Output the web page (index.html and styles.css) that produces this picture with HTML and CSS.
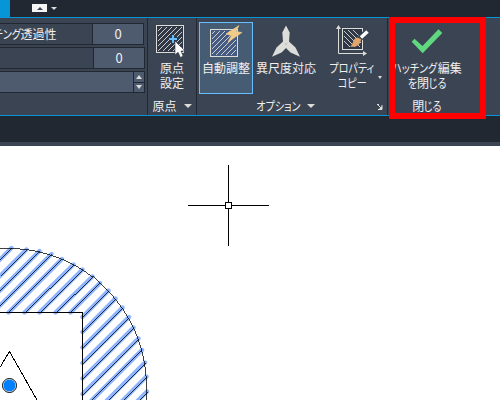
FILE: index.html
```
<!DOCTYPE html>
<html lang="ja">
<head>
    <meta charset="utf-8">
    <title>ハッチング編集</title>
    <link rel="stylesheet" href="styles.css">
</head>
<body>
    <div class="tabs">
        <div class="tab-active"></div>
        <div class="tab-toggle"><span class="arrow up dark"></span></div>
        <span class="arrow down small"></span>
    </div>

    <div class="ribbon">
        <div class="panel props">
            <div class="field"><span class="field-name transparency"><span class="kana k3">チング</span>透過性</span><span class="field-value">0</span></div>
            <div class="field second"><span class="field-name"></span><span class="field-value">0</span></div>
            <div class="field list">
                <span class="list-value"></span>
                <div class="spinner">
                    <div><span class="arrow up"></span></div>
                    <div><span class="arrow down"></span></div>
                </div>
            </div>
        </div>

        <div class="panel origin">
            <div class="tool">
                <svg class="origin-icon" width="32" height="36" viewBox="0 0 32 36">
                    <defs>
                        <pattern id="stripes" width="5" height="5" patternUnits="userSpaceOnUse">
                            <path d="M-1 6L6 -1M-1 1L1 -1M4 6L6 4" stroke="#dcdcd8" stroke-width=".9"/>
                        </pattern>
                    </defs>
                    <rect x="1.5" y="1.5" width="27" height="27" fill="#303746"/>
                    <rect x="3" y="3" width="24" height="24" fill="url(#stripes)"/>
                    <rect x="1.5" y="1.5" width="27" height="27" fill="none" stroke="#dcdcd8"/>
                    <path d="M14 15H22M18 11V19" stroke="#303746" stroke-width="4"/>
                    <path d="M14 15H22M18 11V19" stroke="#66bdff" stroke-width="2"/>
                    <path d="M20 17V31L23 28L25.500 33.500L28 32L26 27H30Z" fill="#fff" stroke="#343c4a" stroke-width=".6"/>
                </svg>
                <div class="label">原点<br>設定</div>
            </div>
            <div class="panel-title">原点<span class="arrow down"></span></div>
        </div>

        <div class="panel options">
            <div class="tools">
                <div class="tool selected">
                    <svg class="auto-icon" width="36" height="36" viewBox="0 0 36 36">
                        <rect x="3.500" y="5.500" width="27" height="27" fill="#465b82"/>
                        <rect x="5" y="7" width="24" height="24" fill="url(#stripes)"/>
                        <rect x="3.500" y="5.500" width="27" height="27" fill="none" stroke="#dcdcd8"/>
                        <path d="M32 1.500L19 10L24.500 11.500L21 18L35 8.500L29 7.500Z" fill="#f1cb88" stroke="#f1cb88" stroke-width=".6"/>
                    </svg>
                    <div class="label">自動調整</div>
                </div>
                <div class="tool scale">
                    <svg width="32" height="36" viewBox="0 0 32 36">
                        <path d="M16 1.500L12.300 8.500L13 17.500L6.500 23.500L2 32.700L11.500 28.500L16 24L20.500 28.500L30 32.700L25.500 23.500L19 17.500L19.700 8.500Z" fill="#dcdcd8"/>
                        <circle cx="16" cy="20" r=".8" fill="#a5a9ae"/>
                    </svg>
                    <div class="label">異尺度対応</div>
                </div>
                <div class="tool copy">
                    <svg width="34" height="36" viewBox="0 0 34 36">
                        <path d="M3.500 4V29.500H30" fill="none" stroke="#dcdcd8"/>
                        <path d="M3.500 1L6 5H1ZM32 29.500L28 27V32Z" fill="#dcdcd8"/>
                        <rect x="7.500" y="4.500" width="20" height="21" fill="#303746" stroke="#dcdcd8"/>
                        <path d="M9 7L25 23M13 6L26 19M18 6L26 14M9 12L20 23M9 17L15 23" stroke="#dcdcd8" stroke-width=".9"/>
                        <path d="M34 6L24 15" stroke="#3b4453" stroke-width="6"/>
                        <path d="M32.500 7.500L26 13.500" stroke="#fff" stroke-width="3.500"/>
                        <path d="M26 15C26 20 22 24 15 22.500C19 20 17 15 22 13.500Z" fill="#e0a66c"/>
                    </svg>
                    <div class="label"><span class="kana k5">プロパティ</span><br><span class="kana k2">コピー</span></div>
                    <span class="arrow down tiny"></span>
                </div>
            </div>
            <div class="panel-title"><span class="kana k4">オプション</span><span class="arrow down"></span>
                <svg class="launcher" width="6" height="6" viewBox="0 0 6 6"><path d="M0 .5H2M.5 .5L4 4M5 1V5.500H1" fill="none" stroke="#dcdcd8"/><path d="M5 2V5H2Z" fill="#dcdcd8"/></svg>
            </div>
        </div>

        <div class="panel close">
            <div class="tool">
                <svg width="32" height="36" viewBox="0 0 32 36">
                    <path d="M.7 17.700L3.500 14.800L11.500 21.900L27.500 5.200L31.300 9L11.700 29.300Z" fill="#5fd880"/>
                </svg>
                <div class="label"><span class="kana k5">ハッチング</span>編集<br><span class="kana k1">を</span>閉<span class="kana k2">じる</span></div>
            </div>
            <div class="panel-title"><span>閉<span class="kana k2">じる</span></span></div>
        </div>
        <div class="highlight"></div>
    </div>

    <div class="doc-bar"></div>

    <svg class="drawing" width="500" height="254" viewBox="0 146 500 254">
        <defs>
            <path id="hatch" d="M-8 267.500L11.500 248M-8 284L26.500 249.500M-8 298.500L39.500 251M-8 313.500L51.500 254M8.500 312.500L62 259M24.500 312.500L73.500 264.500M39.500 312.500L82.500 269.500M55.500 312.500L92.500 276.500M70.500 312.500L100 283M82.500 317L108.500 290.500M82.500 332L115.500 298.500M82.500 347.500L122.500 307.500M82.500 363L129 317M82.500 378.500L133.500 327.500M82.500 394L138.500 338.500M82.500 409.500L142 350M82.500 425L145 362.500M82.500 441L146.500 376.500M82.500 456L147 391.500"/>
        </defs>
        <use href="#hatch" class="glow"/>
        <g class="crisp">
            <use href="#hatch" class="line thin"/>
            <path class="line thin" d="M0 248.500H8C86 248.500 146.500 311 146.500 387V400"/>
            <path class="line" d="M0 312.500H82.500V400"/>
            <path class="line" d="M-1 369L9.500 351.500L37 400"/>
        </g>
        <circle cx="9.500" cy="385.500" r="7" fill="#fff" stroke="#000"/>
        <circle cx="9.500" cy="385.500" r="6" fill="#0080ff"/>
        <path class="line crisp" d="M188 205.500H269M228.500 165V246"/>
        <rect class="crisp" x="225.500" y="202.500" width="6" height="6" fill="#fff" stroke="#000"/>
    </svg>
</body>
</html>
```
FILE: styles.css
```
* {
    box-sizing: border-box;
}

body {
    margin: 0;
    width: 500px;
    height: 400px;
    overflow: hidden;
    background: #fff;
    color: #f0f0f0;
    font-family: "Noto Sans CJK JP", sans-serif;
    font-size: 12px;
    line-height: 15px;
}

.tabs {
    display: flex;
    align-items: flex-start;
    height: 17px;
    background: #212832;
}

.tab-active {
    width: 10px;
    height: 17px;
    background: #0696d7;
}

.tab-toggle {
    display: flex;
    align-items: center;
    justify-content: center;
    width: 15px;
    height: 8px;
    margin: 4px 4px 0 22px;
    background: #f5f5f5;
}

.arrow {
    display: inline-block;
    border: 0 solid transparent;
    border-width: 0 4px;
}

.arrow.down {
    border-top: 4px solid #dcdcd8;
}

.arrow.up {
    border-bottom: 4px solid #dcdcd8;
}

.tab-toggle .arrow {
    border-width: 0 3px 3px;
}

.arrow.dark {
    border-bottom-color: #3b4453;
}

.tabs .small {
    border-width: 3px 3px 0;
    margin-top: 7px;
}

.ribbon {
    position: relative;
    display: flex;
    height: 99px;
    background: #3b4453;
    border-top: 1px solid #0696d7;
    border-bottom: 1px solid #0696d7;
}

.panel {
    display: flex;
    flex-direction: column;
    justify-content: space-between;
    border-right: 1px solid #212832;
    white-space: nowrap;
}

.props {
    display: block;
    width: 148px;
    padding-top: 5px;
}

.field {
    display: flex;
    width: 144px;
    height: 22px;
    border: 1px solid #212832;
    border-left: 0;
    margin-bottom: 2px;
}

.field-name {
    flex: 1;
    line-height: 20px;
}

.transparency {
    margin-left: -6px;
}

.field-value {
    width: 51px;
    border-left: 1px solid #212832;
    background: #4e5b6f;
    text-align: center;
    font-size: 13px;
    line-height: 20px;
}

.second,
.list {
    width: 145px;
}

.list-value {
    flex: 1;
    background: #4e5b6f;
}

.spinner {
    width: 11px;
    display: grid;
    grid-template-rows: 1fr 1fr;
    gap: 1px;
    padding-left: 1px;
    background: #212832;
}

.spinner div {
    display: flex;
    align-items: center;
    justify-content: center;
    background: #4e5b6f;
}

.spinner .arrow {
    border-left-width: 3px;
    border-right-width: 3px;
}

.origin {
    width: 49px;
}

.tool {
    display: flex;
    flex-direction: column;
    align-items: center;
    text-align: center;
    padding-top: 6px;
}

.tool svg {
    display: block;
    flex: none;
}

.origin-icon {
    margin-left: -2px;
}

.auto-icon {
    margin-left: -2px;
}

.panel-title {
    display: flex;
    align-items: center;
    justify-content: center;
    gap: 7px;
    height: 19px;
}

.options {
    width: 191px;
}

.tools {
    display: flex;
    height: 77px;
}

.selected {
    width: 54px;
    height: 72px;
    margin: 4px 0 0 2px;
    padding-top: 1px;
    border: 1px solid #66bdff;
    background: #465c73;
}

.scale {
    width: 66px;
}

.copy {
    position: relative;
    flex: 1;
    padding-right: 2px;
}

/* condensed kana, each box keeps the squeezed width */
.kana {
    display: inline-block;
    font-feature-settings: "palt";
    text-align: center;
    transform: scaleX(0.84);
}

.k1 {
    margin: 0 -1px;
}

.k2 {
    margin: 0 -2px;
}

.k3 {
    margin: 0 -3px;
}

.k4,
.k5 {
    margin: 0 -4px;
}

.arrow.tiny {
    position: absolute;
    right: 5px;
    top: 58px;
    border-width: 3px 2px 0;
}

.options .panel-title {
    position: relative;
    padding-right: 13px;
}

.launcher {
    position: absolute;
    right: 4px;
    top: 8px;
}

.close {
    width: 78px;
    border: 0;
}

.highlight {
    position: absolute;
    left: 389px;
    top: -1px;
    width: 97px;
    height: 102px;
    border: 6px solid #f00;
}

.doc-bar {
    height: 30px;
    background: #212832;
    border-bottom: 4px solid #3b4453;
}

.drawing {
    display: block;
}

.crisp {
    shape-rendering: crispEdges;
}

.glow {
    fill: none;
    stroke: #8db4ff;
    stroke-width: 4.4px;
    stroke-linecap: round;
}

.line {
    fill: none;
    stroke: #000;
    stroke-width: 1px;
}

.thin {
    stroke-width: 0.75px;
}
```
